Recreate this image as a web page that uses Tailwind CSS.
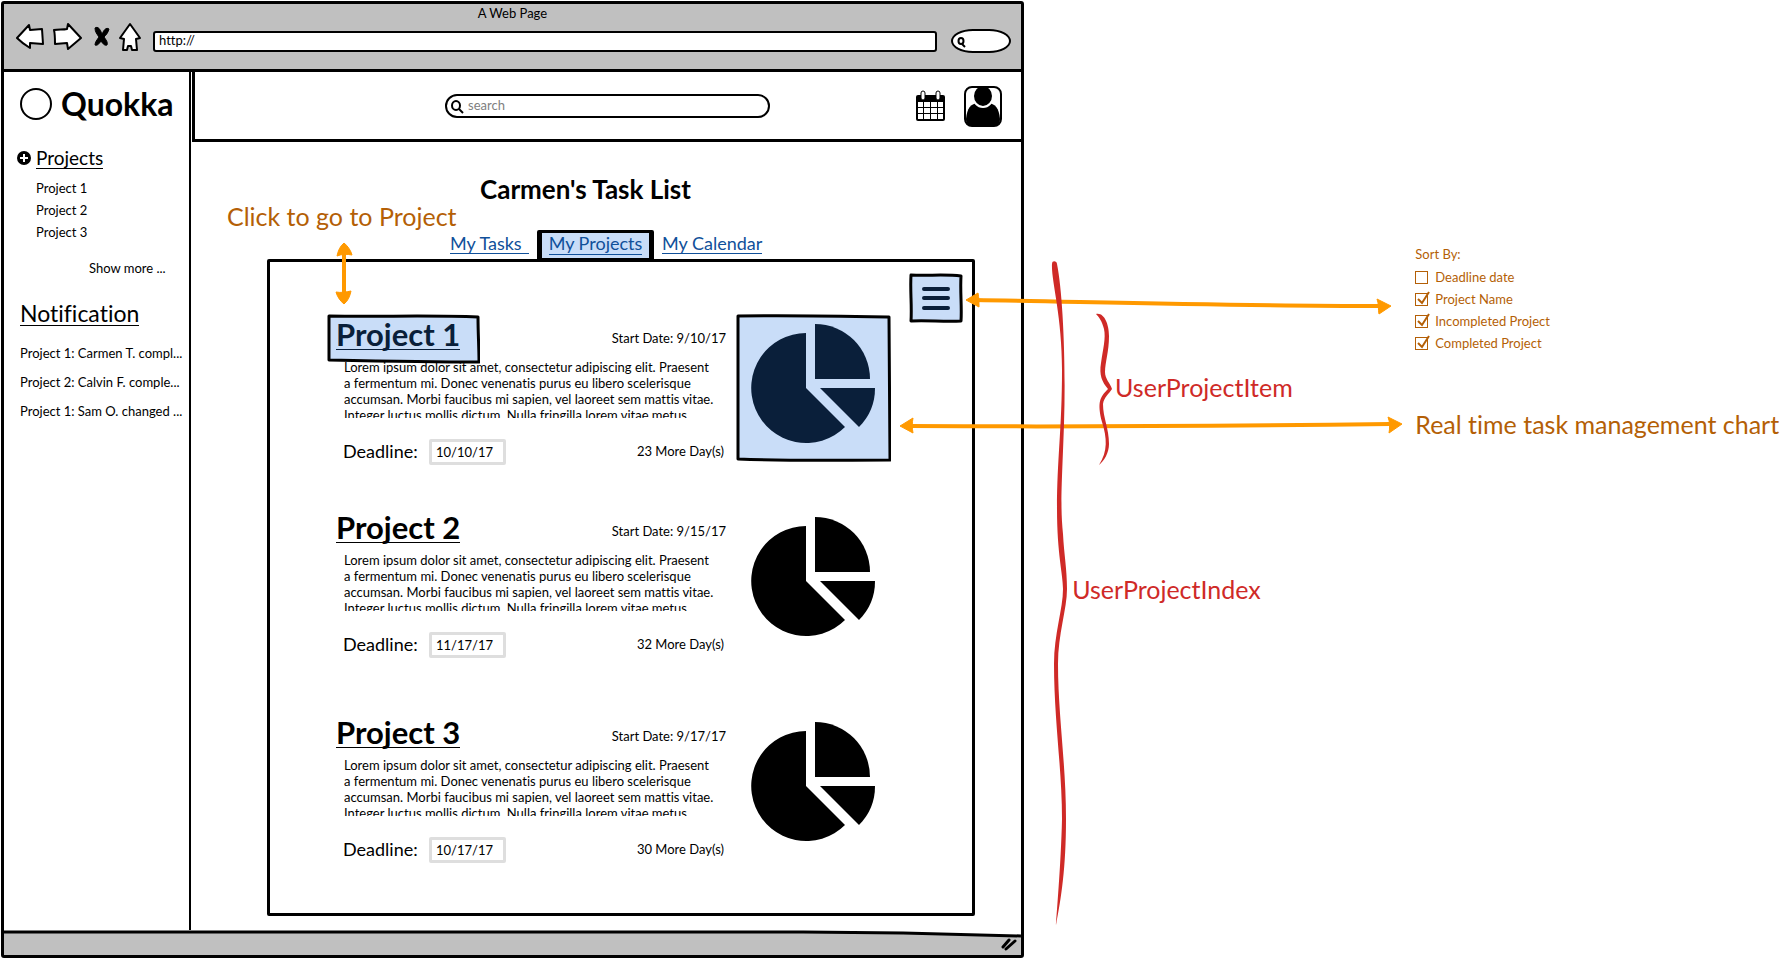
<!DOCTYPE html>
<html lang="en">
<head>
<meta charset="utf-8">
<title>A Web Page</title>
<script src="https://cdn.jsdelivr.net/npm/@tailwindcss/browser@4"></script>
</head>
<body class="relative min-h-screen overflow-x-hidden bg-white font-['Lato','Liberation_Sans',sans-serif] text-[13px] leading-4 text-black [font-variant-ligatures:none]">

<!-- Browser window -->
<div class="flex w-[57.3%] flex-col pt-px pl-px">
  <div class="flex flex-col rounded-[3px] border-[3px] border-black">

    <div class="border-b-[3px] border-black bg-[#c0c0c0]">
      <div class="h-[18px] pt-px text-center">A Web Page</div>
      <div class="flex h-[47px] items-start pr-2.5 pl-3">
        <button aria-label="Back" class="shrink-0"><svg width="28" height="30" viewBox="0 0 28 30" fill="#fff" stroke="#000" stroke-width="2" stroke-linejoin="round"><path d="M1 16 13 3l1 5 12-1 1 15-13-1v5C9 23 5 20 1 16Z"/></svg></button>
        <button aria-label="Forward" class="ml-2 shrink-0"><svg width="30" height="30" viewBox="0 0 30 30" fill="#fff" stroke="#000" stroke-width="2" stroke-linejoin="round"><path d="M2 8c4-1 9 0 13-1l1-5 13 14-13 11-1-6-12 1C3 17 3 12 2 8Z"/></svg></button>
        <button aria-label="Stop" class="ml-2.5 shrink-0"><svg width="20" height="30" viewBox="0 0 20 30" fill="#000" stroke="#000" stroke-width="1" stroke-linejoin="round"><path d="M3 6c3-2 5 1 7 6 2-4 4-7 7-5-1 4-3 6-5 8 2 3 4 5 3 8-2 1-4-1-6-4-2 3-4 5-6 4 0-3 2-5 4-8C5 12 3 10 3 6Z"/></svg></button>
        <button aria-label="Home" class="ml-[5px] shrink-0"><svg width="26" height="30" viewBox="0 0 26 30" fill="#fff" stroke="#000" stroke-width="2" stroke-linejoin="round"><path d="m13 2 10 14-4 1 1 11h-5l-1-4h-3l-1 4H6l1-11-4-1Z"/></svg></button>
        <label for="url" class="sr-only">Address</label>
        <input id="url" type="text" value="http://" class="mt-[9px] ml-2.5 h-[21px] min-w-0 flex-1 rounded-[3px] border-2 border-black bg-white px-1 pb-1">
        <div class="relative mt-[7px] ml-3.5 h-6 w-[60px] shrink-0">
          <svg class="pointer-events-none absolute top-2 left-1.5" width="9" height="11" viewBox="0 0 9 11" fill="none" stroke="#000" stroke-width="2"><ellipse cx="4" cy="4" rx="2.500" ry="3"/><path d="m5 7 3 3"/></svg>
          <input type="search" aria-label="Web search" class="h-6 w-full rounded-[40%/55%] border-2 border-black bg-white pl-4">
        </div>
      </div>
    </div>

    <div class="flex">
      <!-- Sidebar -->
      <aside class="w-[187px] shrink-0 border-r-2 border-black">
        <div class="flex items-center gap-[9px] pt-4 pl-4">
          <svg class="shrink-0" width="32" height="32" viewBox="0 0 32 32" fill="#fff" stroke="#000" stroke-width="2"><circle cx="16" cy="16" r="15"/></svg>
          <span class="text-[32px] leading-8 font-bold">Quokka</span>
        </div>
        <div class="mt-[27px] flex items-center gap-[5px] pl-[13px]">
          <button aria-label="Add project" class="shrink-0"><svg width="14" height="14" viewBox="0 0 14 14"><circle cx="7" cy="7" r="7"/><path d="M7 3v8M3 7h8" stroke="#fff" stroke-width="2"/></svg></button>
          <a href="#" class="border-b border-black text-[19px] leading-[21px]">Projects</a>
        </div>
        <ul class="mt-[11px] flex flex-col gap-[6px] pl-8">
          <li><a href="#">Project 1</a></li>
          <li><a href="#">Project 2</a></li>
          <li><a href="#">Project 3</a></li>
        </ul>
        <a href="#" class="mt-5 ml-[85px] block">Show more ...</a>
        <h2 class="mt-[25px] ml-4 w-fit border-b border-black text-[23px] leading-6">Notification</h2>
        <ul class="mt-[19px] flex flex-col gap-[13px] pl-4 whitespace-nowrap">
          <li>Project 1: Carmen T. compl...</li>
          <li>Project 2: Calvin F. comple...</li>
          <li>Project 1: Sam O. changed ...</li>
        </ul>
      </aside>

      <div class="min-w-0 flex-1">
        <!-- Top bar -->
        <header class="-mr-[3px] ml-px flex h-[70px] items-center border-[3px] border-t-0 border-black pr-[19px]">
          <div class="relative ml-[250px] h-6 max-w-[325px] flex-1">
            <svg class="pointer-events-none absolute top-1.5 left-1.5" width="13" height="14" viewBox="0 0 13 14" fill="none" stroke="#000" stroke-width="2"><ellipse cx="5" cy="5.500" rx="4" ry="4.500"/><path d="m8 9 4 4"/></svg>
            <input type="search" placeholder="search" aria-label="Search tasks" class="h-6 w-full rounded-full border-2 border-black bg-white pb-0.5 pl-[21px] placeholder:text-[#808080]">
          </div>
          <div class="ml-auto flex shrink-0 items-center gap-[18px] pl-4">
            <button aria-label="Calendar"><svg width="31" height="32" viewBox="0 0 31 32"><path d="M3 5h25a2 2 0 0 1 2 2v22a2 2 0 0 1-2 2H3a2 2 0 0 1-2-2V7a2 2 0 0 1 2-2Z"/><path fill="#fff" d="M3 12h5v5H3zM9 12h6v5H9zM16 12h6v5h-6zM23 12h5v5h-5zM3 18h5v5H3zM9 18h6v5H9zM16 18h6v5h-6zM23 18h5v5h-5zM3 24h5v5H3zM9 24h6v5H9zM16 24h6v5h-6zM23 24h5v5h-5z"/><rect x="6" y="1" width="4" height="9" rx="2" fill="#fff" stroke="#000"/><rect x="21" y="1" width="4" height="9" rx="2" fill="#fff" stroke="#000"/></svg></button>
            <button aria-label="Account"><svg width="38" height="42" viewBox="0 0 38 42"><path d="M2 34C3 23 7 19 13 18h12c6 1 10 5 11 16 0 4-2 7-5 7H7c-3 0-5-3-5-7Z"/><ellipse cx="19" cy="11" rx="10" ry="11" stroke="#fff" stroke-width="2"/><rect x="1" y="2" width="36" height="39" rx="7" fill="none" stroke="#000" stroke-width="2"/></svg></button>
          </div>
        </header>

        <main class="pr-[46px] pb-3.5 pl-[76px]">
          <h1 class="mt-[33px] ml-[213px] text-[26px] leading-7 font-bold whitespace-nowrap">Carmen's Task List</h1>
          <nav class="relative mt-[27px] ml-[183px] flex h-[29px] items-start text-[18px] leading-5 whitespace-nowrap text-[#10509a]">
            <a href="#" class="mt-[3px] w-[79px] border-b border-[#10509a]">My Tasks</a>
            <a href="#" class="relative ml-2 flex h-[31px] w-[117px] justify-center rounded-[2px] border-x-[5px] border-y-[3px] border-black bg-[#c9ddf8]"><span class="h-[22px] border-b border-[#10509a]">My Projects</span></a>
            <a href="#" class="mt-[3px] ml-2 border-b border-[#10509a]">My Calendar</a>
          </nav>

          <section class="relative rounded-[2px] border-[3px] border-black pb-[50px] pl-[57px]">
            <div class="flex justify-end pt-[11px] pr-[9px]">
              <button aria-label="Sort projects" class="relative h-[50px] w-[54px]">
                <svg class="absolute inset-0 size-full" viewBox="0 0 54 50"><path d="M2 2c16 1 34-1 50 1-1 16 1 30 0 45-17 1-34-1-50 0 1-16-1-30 0-46Z" fill="#c9ddf8" stroke="#000" stroke-width="3" stroke-linejoin="round"/><path d="M15 16h24M15 25h24M15 35h24" stroke="#0a1f3a" stroke-width="4" stroke-linecap="round"/></svg>
              </button>
            </div>

            <div class="-mt-[9px] flex flex-col">
              <article class="flex items-start gap-1.5">
                <div class="w-[403px]">
                  <div class="flex justify-between">
                    <div class="relative h-[50px] w-[153px]">
                      <svg class="absolute inset-0 size-full" viewBox="0 0 153 50"><path d="M2 2c50 1 100-1 149 1 0 16 1 30 1 45-50 0-100-1-150-2Z" fill="#c9ddf8" stroke="#000" stroke-width="3" stroke-linejoin="round"/></svg>
                      <h2 class="relative ml-[9px] pt-1.5"><a href="#" class="inline-block border-b border-[#0a1f3a] text-[31px] leading-[29px] font-bold text-[#0a1f3a]">Project 1</a></h2>
                    </div>
                    <span class="pt-4 pr-1">Start Date: 9/10/17</span>
                  </div>
                  <p class="-mt-[5px] ml-[17px] h-[59px] overflow-hidden whitespace-nowrap">Lorem ipsum dolor sit amet, consectetur adipiscing elit. Praesent<br>a fermentum mi. Donec venenatis purus eu libero scelerisque<br>accumsan. Morbi faucibus mi sapien, vel laoreet sem mattis vitae.<br>Integer luctus mollis dictum. Nulla fringilla lorem vitae metus</p>
                  <div class="mt-[21px] flex items-center pr-1.5 pl-4">
                    <label for="d1" class="w-[86px] pb-0.5 text-[18px] leading-6">Deadline:</label>
                    <input id="d1" type="text" value="10/10/17" class="h-[26px] w-[77px] rounded-[2px] border-[3px] border-[#dedede] px-1">
                    <span class="ml-auto pb-0.5">23 More Day(s)</span>
                  </div>
                </div>
                <svg class="shrink-0" width="155" height="148" viewBox="0 0 155 148"><path d="M2 2c50-1 100 0 151 1l1 143c-51 0-100 1-152-1Z" fill="#c9ddf8" stroke="#000" stroke-width="3" stroke-linejoin="round"/><g fill="#0a1f3a"><path d="M70 74V19a55 55 0 1 0 39 94Z"/><path d="M79 65V10a55 55 0 0 1 55 55Z"/><path d="M84 74h55a55 55 0 0 1-16 39Z"/></g></svg>
              </article>

              <article class="mt-[42px] flex items-start gap-1.5">
                <div class="w-[403px]">
                  <div class="flex h-[50px] justify-between">
                    <h2 class="ml-[9px] pt-1.5"><a href="#" class="inline-block border-b border-black text-[31px] leading-[29px] font-bold">Project 2</a></h2>
                    <span class="pt-4 pr-1">Start Date: 9/15/17</span>
                  </div>
                  <p class="-mt-[5px] ml-[17px] h-[59px] overflow-hidden whitespace-nowrap">Lorem ipsum dolor sit amet, consectetur adipiscing elit. Praesent<br>a fermentum mi. Donec venenatis purus eu libero scelerisque<br>accumsan. Morbi faucibus mi sapien, vel laoreet sem mattis vitae.<br>Integer luctus mollis dictum. Nulla fringilla lorem vitae metus</p>
                  <div class="mt-[21px] flex items-center pr-1.5 pl-4">
                    <label for="d2" class="w-[86px] pb-0.5 text-[18px] leading-6">Deadline:</label>
                    <input id="d2" type="text" value="11/17/17" class="h-[26px] w-[77px] rounded-[2px] border-[3px] border-[#dedede] px-1">
                    <span class="ml-auto pb-0.5">32 More Day(s)</span>
                  </div>
                </div>
                <svg class="shrink-0" width="155" height="148" viewBox="0 0 155 148"><path d="M70 74V19a55 55 0 1 0 39 94Z"/><path d="M79 65V10a55 55 0 0 1 55 55Z"/><path d="M84 74h55a55 55 0 0 1-16 39Z"/></svg>
              </article>

              <article class="mt-[54px] flex items-start gap-1.5">
                <div class="w-[403px]">
                  <div class="flex h-[50px] justify-between">
                    <h2 class="ml-[9px] pt-1.5"><a href="#" class="inline-block border-b border-black text-[31px] leading-[29px] font-bold">Project 3</a></h2>
                    <span class="pt-4 pr-1">Start Date: 9/17/17</span>
                  </div>
                  <p class="-mt-[5px] ml-[17px] h-[59px] overflow-hidden whitespace-nowrap">Lorem ipsum dolor sit amet, consectetur adipiscing elit. Praesent<br>a fermentum mi. Donec venenatis purus eu libero scelerisque<br>accumsan. Morbi faucibus mi sapien, vel laoreet sem mattis vitae.<br>Integer luctus mollis dictum. Nulla fringilla lorem vitae metus</p>
                  <div class="mt-[21px] flex items-center pr-1.5 pl-4">
                    <label for="d3" class="w-[86px] pb-0.5 text-[18px] leading-6">Deadline:</label>
                    <input id="d3" type="text" value="10/17/17" class="h-[26px] w-[77px] rounded-[2px] border-[3px] border-[#dedede] px-1">
                    <span class="ml-auto pb-0.5">30 More Day(s)</span>
                  </div>
                </div>
                <svg class="shrink-0" width="155" height="148" viewBox="0 0 155 148"><path d="M70 74V19a55 55 0 1 0 39 94Z"/><path d="M79 65V10a55 55 0 0 1 55 55Z"/><path d="M84 74h55a55 55 0 0 1-16 39Z"/></svg>
              </article>
            </div>
          </section>
        </main>
      </div>
    </div>

    <!-- Status bar with resize grip -->
    <footer class="relative h-[25px]">
      <svg class="absolute inset-0 size-full" viewBox="0 0 1018 25" preserveAspectRatio="none"><path d="M0 2h800l100 1 118 3v19H0Z" fill="#c0c0c0"/><path d="M0 2h800l100 1 118 3" fill="none" stroke="#000" stroke-width="3"/></svg>
      <svg class="absolute right-[3px] bottom-1" width="18" height="14" viewBox="0 0 18 14" stroke="#000" stroke-width="3" stroke-linecap="round"><path d="m3 10 6-7M6 12l9-8"/></svg>
    </footer>
  </div>
</div>

<!-- Annotation arrows and braces drawn over the wireframe -->
<svg class="pointer-events-none absolute top-0 left-0 h-[960px] w-full" viewBox="0 0 1787 960" preserveAspectRatio="none">
  <g fill="none" stroke="#ff9900" stroke-width="4">
    <path d="M975 300c120 2 260 6 405 6"/>
    <path d="M910 426c160 1 320 0 480-2"/>
    <path d="M344 252v44"/>
  </g>
  <g fill="#ff9900" stroke="#ff9900" stroke-width="1" stroke-linejoin="round">
    <path d="M966 300 978 293c1 5 1 9 1 14Z"/>
    <path d="M1391 306l-14-7c2 5 1 11 2 15Z"/>
    <path d="M900 426l13-8c-1 5-1 10 0 15Z"/>
    <path d="M1402 424l-14-7c2 5 2 11 1 16Z"/>
    <path d="M344 243c4 3 7 8 8 12-5-1-10-1-15 1 1-5 3-10 7-13Z"/>
    <path d="M344 304c4-3 6-8 7-13-5 1-10 2-15 1 1 4 4 9 8 12Z"/>
  </g>
  <g fill="#cf2a27">
    <path d="M1052 264c0-4 5-3 5 0 6 30 9 100 7 160-2 60-4 80-1 110 1 20 4 35 4 55 0 20-9 45-9 75 0 50 8 100 8 155 0 50-5 80-10 106 0-4 5-60 6-106 0-50-8-100-8-155 0-30 9-55 9-75 0-15-6-35-6-80 0-50 5-80 5-139 0-55-11-90-10-106Z"/>
    <path d="M1096 314c8-2 13 10 13 22 0 16-4 26-4 36 0 7 5 11 7 17-3 5-8 8-9 15 0 14 6 24 6 40 0 9-5 17-10 21 9-14 8-27 3-43-5-20-2-25 6-33-6-7-9-14-7-26 2-14 5-25 3-34-2-8-5-12-8-15Z"/>
  </g>
</svg>

<p class="absolute top-[202px] left-[12.7%] text-[25px] leading-7 whitespace-nowrap text-[#b45f06]">Click to go to Project</p>
<p class="absolute top-[373px] left-[62.4%] text-[25px] leading-7 whitespace-nowrap text-[#cf2a27]">UserProjectItem</p>
<p class="absolute top-[575px] left-[60%] text-[25px] leading-7 whitespace-nowrap text-[#cf2a27]">UserProjectIndex</p>
<p class="absolute top-[410px] left-[79.2%] text-[25px] leading-7 whitespace-nowrap text-[#b45f06]">Real time task management chart</p>

<fieldset class="absolute top-[246px] left-[79.2%] flex flex-col gap-[6px] whitespace-nowrap text-[#b45f06]">
  <legend class="mb-[7px]">Sort By:</legend>
  <label class="relative flex items-center gap-[7px]"><input type="checkbox" class="peer size-[13px] appearance-none border border-[#b45f06]">Deadline date</label>
  <label class="relative flex items-center gap-[7px]"><input type="checkbox" checked class="peer size-[13px] appearance-none border border-[#b45f06]"><svg class="absolute top-0 left-0 hidden peer-checked:block" width="16" height="16" viewBox="0 0 16 16" fill="none" stroke="#b45f06" stroke-width="2"><path d="m3 8 4 4 7-11"/></svg>Project Name</label>
  <label class="relative flex items-center gap-[7px]"><input type="checkbox" checked class="peer size-[13px] appearance-none border border-[#b45f06]"><svg class="absolute top-0 left-0 hidden peer-checked:block" width="16" height="16" viewBox="0 0 16 16" fill="none" stroke="#b45f06" stroke-width="2"><path d="m3 8 4 4 7-11"/></svg>Incompleted Project</label>
  <label class="relative flex items-center gap-[7px]"><input type="checkbox" checked class="peer size-[13px] appearance-none border border-[#b45f06]"><svg class="absolute top-0 left-0 hidden peer-checked:block" width="16" height="16" viewBox="0 0 16 16" fill="none" stroke="#b45f06" stroke-width="2"><path d="m3 8 4 4 7-11"/></svg>Completed Project</label>
</fieldset>
</body>
</html>
